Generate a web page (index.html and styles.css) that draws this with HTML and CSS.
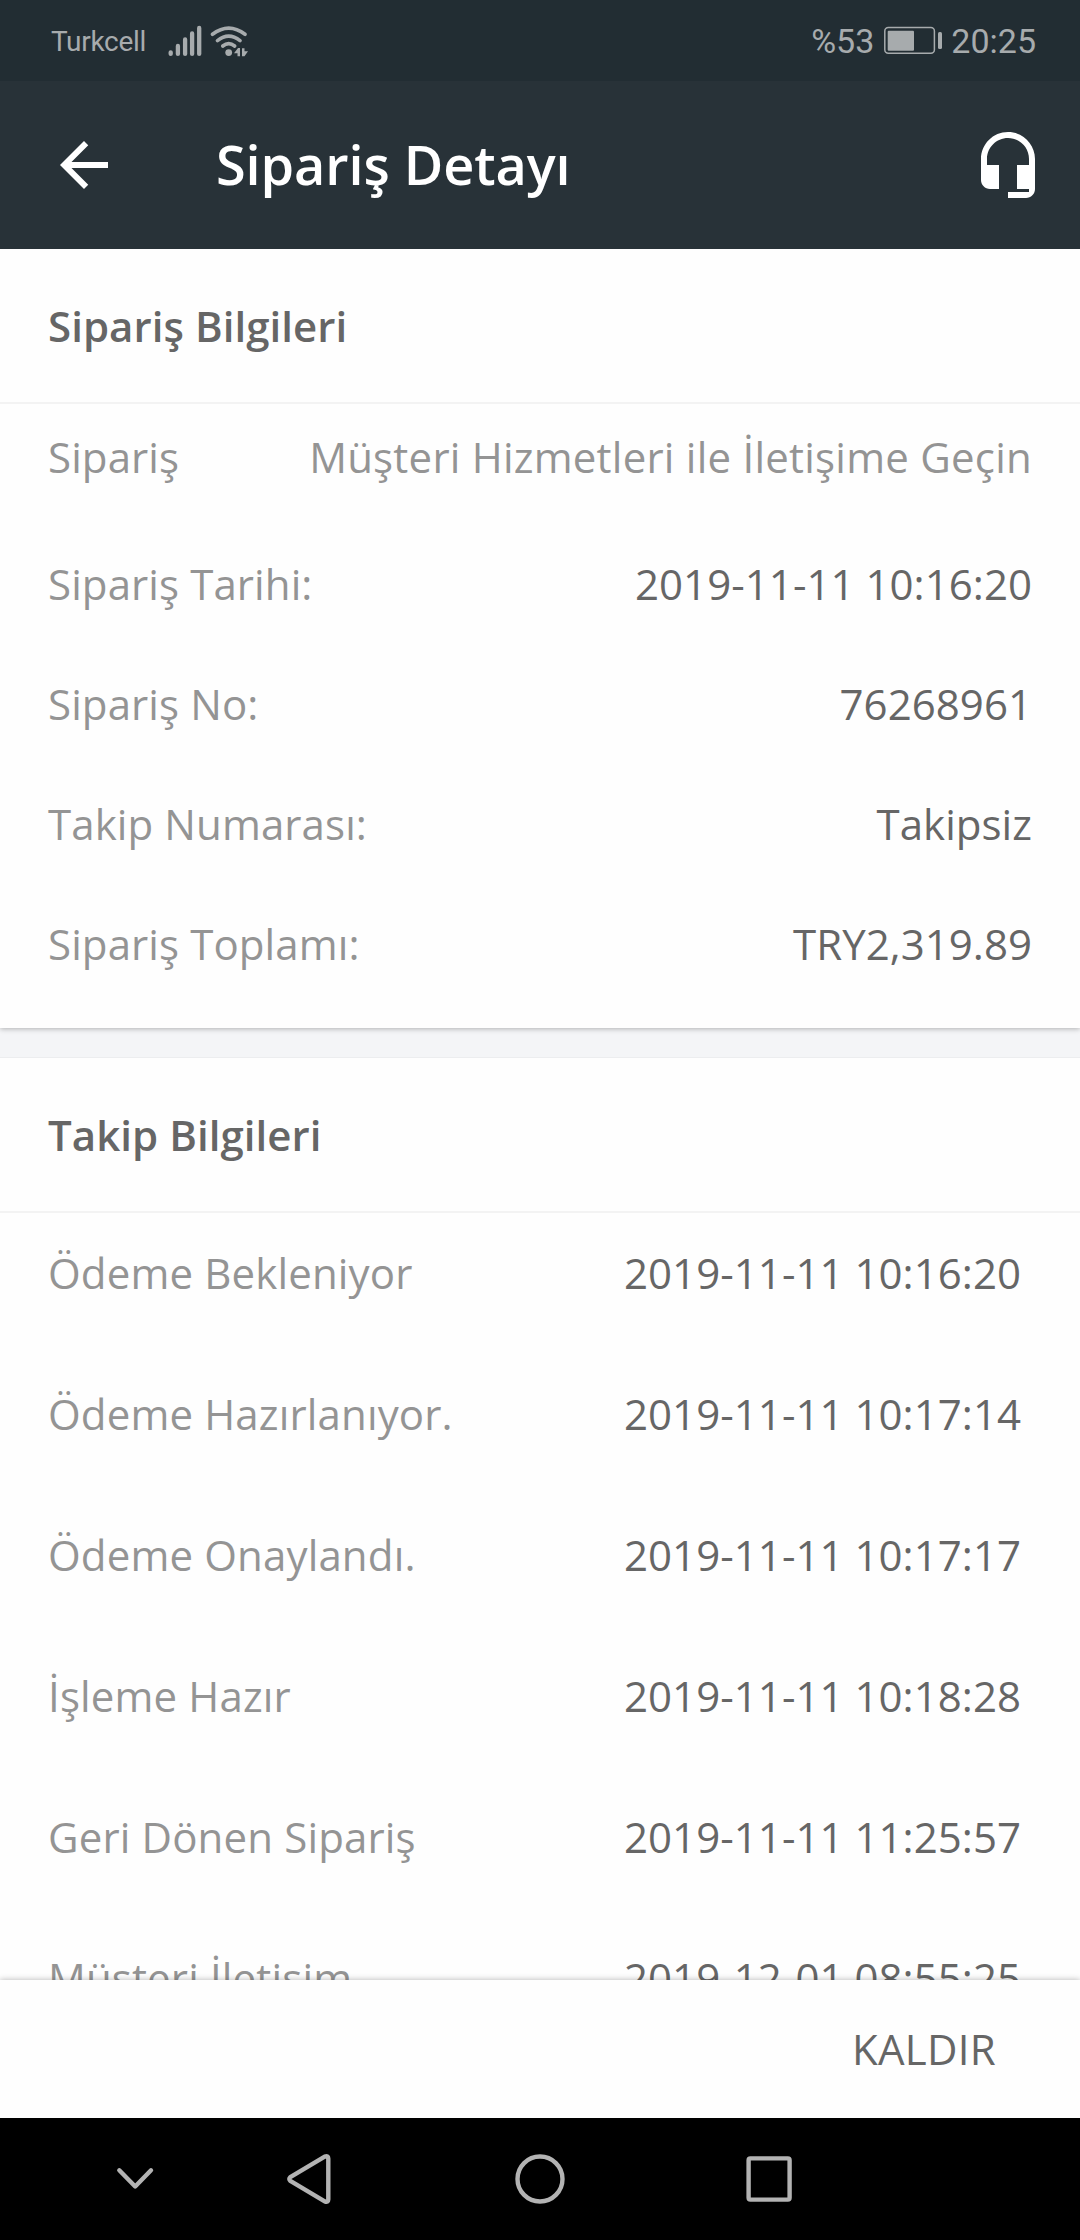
FILE: index.html
```html
<!DOCTYPE html>
<html lang="tr">
<head>
<meta charset="utf-8">
<title>Sipariş Detayı</title>
<link rel="stylesheet" href="styles.css">
</head>
<body>
<div class="screen">
  <div class="status">
    <span class="carrier">Turkcell</span>
    <svg class="signals" width="84" height="36" viewBox="166 22 84 36">
      <g class="line" stroke-width="4.3">
        <path d="M170.7 51.300V52.900M177.900 45V52.900M185.100 38.500V52.900M192.100 32.500V52.900M199.200 27V52.900"/>
      </g>
      <g class="line" stroke-width="3.6">
        <path d="M212.500 33.300Q228.700 21.100 245 33.300M217.500 39.600Q228.700 30.800 240 39.600M222.800 45Q228.700 40.200 234.600 45"/>
      </g>
      <circle class="solid" cx="228.700" cy="51.600" r="3.400"/>
      <path class="solid" d="M234 52.200L238 47H240V55.300H237.500V52.200ZM248 50.200L244.500 55.300H242V47.200H244.500V50.200Z"/>
    </svg>
    <span class="percent">%53</span>
    <svg class="battery" width="60" height="30" viewBox="882 26 60 30">
      <rect class="outline" x="883.800" y="27.600" width="49.600" height="25.600" rx="3.500"/>
      <rect class="solid" x="886.700" y="30.700" width="26.300" height="20" rx="1"/>
      <rect class="solid" x="937" y="32" width="4" height="17" rx="1.500"/>
    </svg>
    <span class="clock">20:25</span>
  </div>
  <header class="appbar">
    <svg width="72" height="72" viewBox="0 0 24 24"><path d="M20 11H7.830l5.590-5.590L12 4l-8 8 8 8 1.410-1.410L7.830 13H20v-2z"/></svg>
    <h1>Sipariş Detayı</h1>
    <svg width="72" height="72" viewBox="0 0 24 24"><path d="M12 1c-4.970 0-9 4.030-9 9v7c0 1.660 1.340 3 3 3h3v-8H5v-2c0-3.870 3.130-7 7-7s7 3.130 7 7v2h-4v8h4v1h-7v2h6c1.660 0 3-1.340 3-3V10c0-4.970-4.030-9-9-9z"/></svg>
  </header>
  <main class="content">
    <section class="card info">
      <h2>Sipariş Bilgileri</h2>
      <div class="row first"><span>Sipariş</span><span class="note">Müşteri Hizmetleri ile İletişime Geçin</span></div>
      <div class="row"><span>Sipariş Tarihi:</span><b>2019-11-11 10:16:20</b></div>
      <div class="row"><span>Sipariş No:</span><b>76268961</b></div>
      <div class="row"><span>Takip Numarası:</span><b>Takipsiz</b></div>
      <div class="row"><span>Sipariş Toplamı:</span><b>TRY2,319.89</b></div>
    </section>
    <section class="card tracking">
      <h2>Takip Bilgileri</h2>
      <div class="row"><span>Ödeme Bekleniyor</span><b>2019-11-11 10:16:20</b></div>
      <div class="row"><span>Ödeme Hazırlanıyor.</span><b>2019-11-11 10:17:14</b></div>
      <div class="row"><span>Ödeme Onaylandı.</span><b>2019-11-11 10:17:17</b></div>
      <div class="row"><span>İşleme Hazır</span><b>2019-11-11 10:18:28</b></div>
      <div class="row"><span>Geri Dönen Sipariş</span><b>2019-11-11 11:25:57</b></div>
      <div class="row"><span>Müşteri İletişim</span><b>2019-12-01 08:55:25</b></div>
    </section>
  </main>
  <footer class="actions"><button type="button">KALDIR</button></footer>
  <nav class="sysnav">
    <svg width="42" height="60" viewBox="0 0 42 60"><path d="M5.300 21.300L21.200 37.500L37 21.300"/></svg>
    <svg width="48" height="60" viewBox="0 0 48 60"><path d="M5.300 28.200L39.700 7.600Q43.300 6.300 43.300 9.500V50.500Q43.300 53.700 39.700 52.400L5.300 31.800Q3.300 30 5.300 28.200Z"/></svg>
    <svg width="60" height="60" viewBox="0 0 60 60"><circle cx="30" cy="30" r="22.500"/></svg>
    <svg width="50" height="60" viewBox="0 0 50 60"><rect x="4.600" y="9.400" width="41" height="41.200" rx="1.800"/></svg>
  </nav>
</div>
</body>
</html>
```
FILE: styles.css
```css
* { box-sizing: border-box; }

body {
  margin: 0;
  font-family: "Open Sans", sans-serif;
  font-size: 42px;
  color: #666;
}

.screen {
  display: flex;
  flex-direction: column;
  width: 1080px;
  height: 2240px;
  overflow: hidden;
  background: #f4f5f7;
}

.status {
  display: flex;
  flex: none;
  align-items: center;
  height: 81px;
  padding: 0 44px 0 51px;
  background: #222d33;
  color: #a7abad;
  font-family: Roboto, sans-serif;
  font-size: 34px;
}

.status svg { display: block; }
.carrier { width: 115px; padding-top: 2px; font-size: 28px; letter-spacing: -.3px; }
.percent { margin-left: auto; }
.battery { margin: 0 8px 0 9px; }
.solid { fill: #a7abad; }
.line { fill: none; stroke: #a7abad; stroke-linecap: round; }
.outline { fill: none; stroke: #a7abad; stroke-width: 1.5; }

.appbar {
  display: flex;
  flex: none;
  align-items: center;
  height: 168px;
  padding: 0 36px 0 48px;
  background: #283238;
  color: #fff;
}

.appbar svg { fill: #fff; }

.appbar h1 {
  flex: 1;
  margin: 0 0 0 96px;
  padding-bottom: 2px;
  font-size: 54px;
  font-weight: 600;
  letter-spacing: -.08px;
}

.content {
  flex: 1;
  min-height: 0;
  overflow: hidden;
}

.card { background: #fefefe; }

.card h2 {
  display: flex;
  align-items: center;
  height: 155px;
  margin: 0;
  padding: 0 48px;
  border-bottom: 2px solid #f3f3f3;
  font-size: 42px;
  font-weight: 600;
  letter-spacing: .05px;
}

.row {
  display: flex;
  align-items: center;
  justify-content: space-between;
  height: 120px;
  padding: 0 48px 2px;
  white-space: nowrap;
}

.row span { color: #949494; letter-spacing: .1px; }
.row .note { letter-spacing: .23px; }
.row b { font-weight: 400; letter-spacing: .04px; }
.row.first { height: 105px; margin-bottom: 15px; padding-bottom: 0; }

.info {
  height: 779px;
  margin-bottom: 30px;
  box-shadow: 0 1px 5px rgba(0, 0, 0, .28);
}

.tracking { box-shadow: 0 0 1px rgba(0, 0, 0, .2); }
.tracking .row { margin-bottom: 21px; padding-right: 59px; }
.tracking .row span { letter-spacing: .15px; }

.actions {
  display: flex;
  flex: none;
  align-items: center;
  justify-content: flex-end;
  position: relative;
  height: 138px;
  padding: 0 84px 2px 0;
  background: #fefefe;
  box-shadow: 0 0 6px rgba(0, 0, 0, .3);
}

.actions button {
  padding: 0;
  border: 0;
  background: none;
  color: inherit;
  font: inherit;
  letter-spacing: .3px;
}

.sysnav {
  display: flex;
  flex: none;
  align-items: center;
  position: relative;
  height: 122px;
  padding-left: 114px;
  background: #000;
}

.sysnav svg {
  flex: none;
  margin-right: 129px;
  fill: none;
  stroke: #b3b3b3;
  stroke-width: 4.4;
  stroke-linecap: round;
  stroke-linejoin: round;
}

.sysnav svg:nth-child(2) { margin-right: 177px; }
.sysnav svg:nth-child(3) { margin-right: 174px; }
```
